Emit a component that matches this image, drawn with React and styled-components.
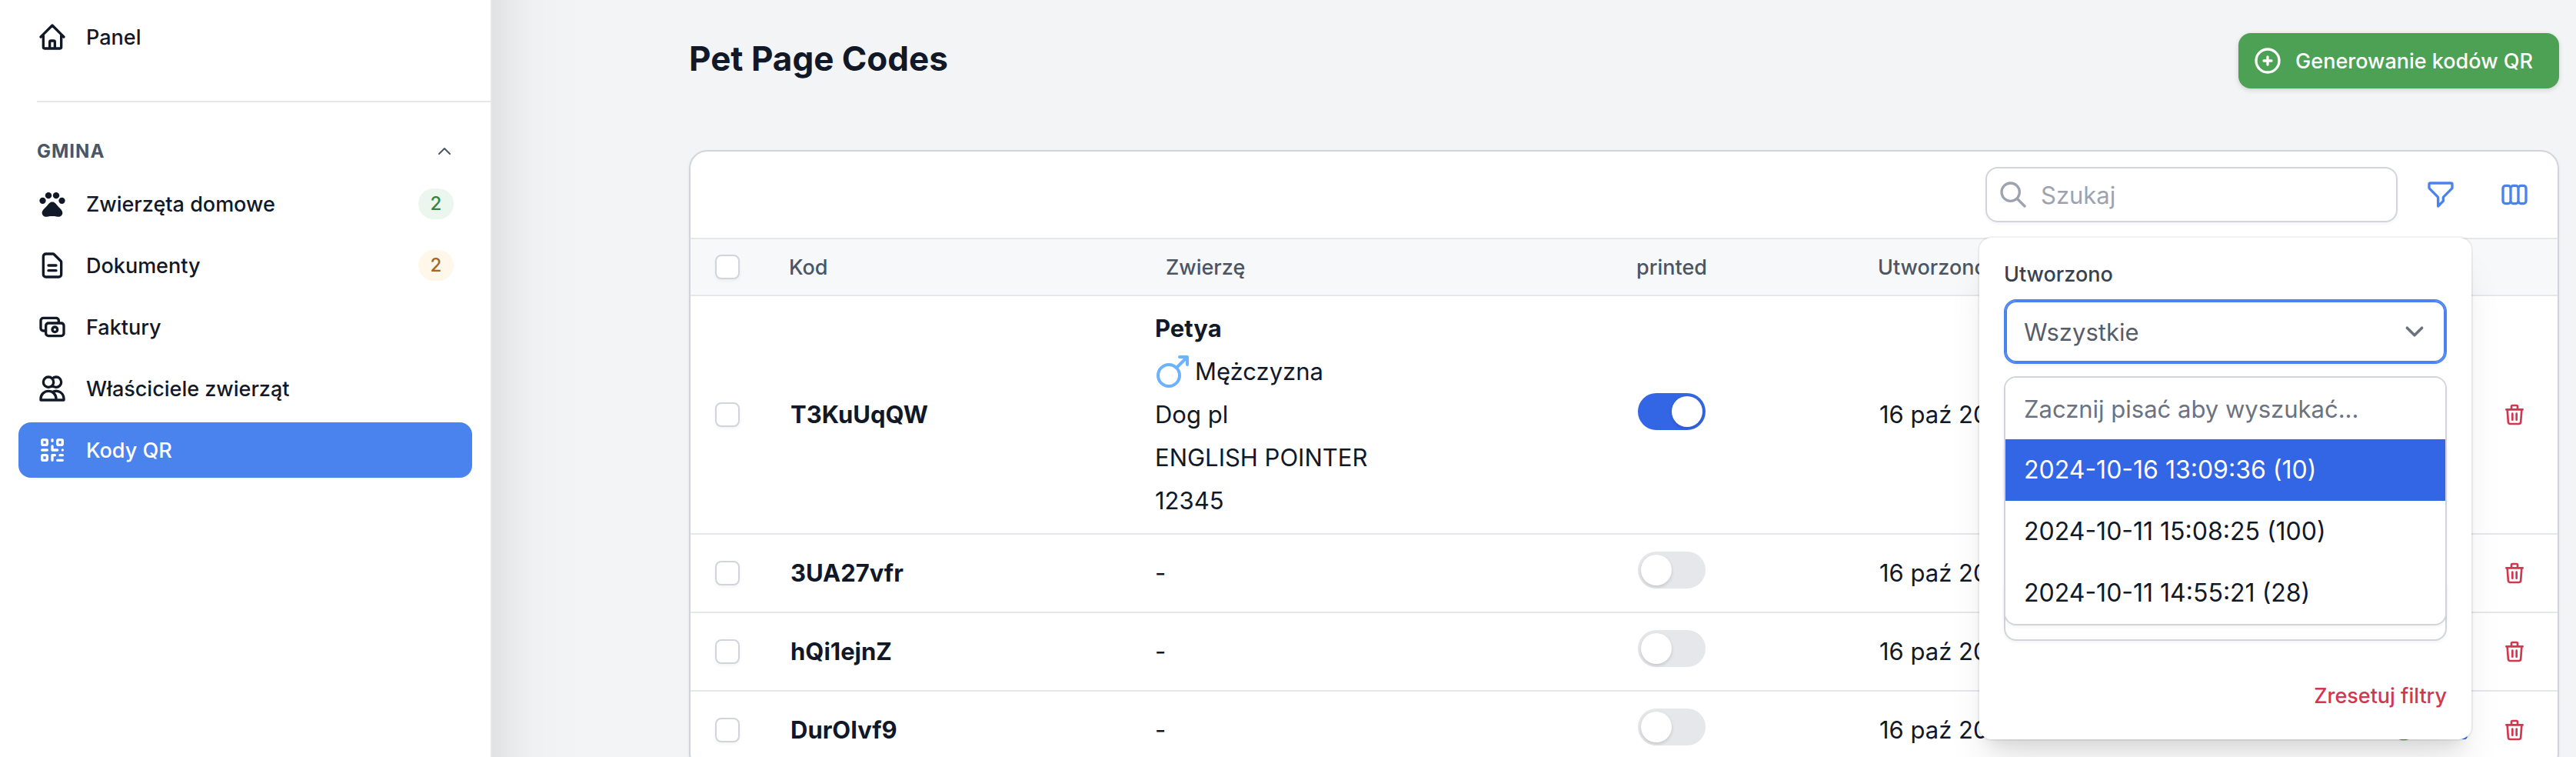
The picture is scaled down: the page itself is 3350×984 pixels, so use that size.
import { useState } from "react";
import styled, { createGlobalStyle, css } from "styled-components";
import {
  HiOutlineHome,
  HiOutlineChevronUp,
  HiOutlineDocumentText,
  HiOutlineCash,
  HiOutlineUsers,
  HiOutlineQrcode,
  HiOutlinePlusCircle,
  HiOutlineSearch,
  HiOutlineFilter,
  HiOutlineViewBoards,
  HiOutlineTrash,
  HiOutlinePencilAlt,
  HiOutlineCheckCircle,
} from "react-icons/hi";
import { MdPets } from "react-icons/md";

const menu = [
  { label: "Zwierzęta domowe", icon: MdPets, badge: 2, tone: "success" },
  { label: "Dokumenty", icon: HiOutlineDocumentText, badge: 2, tone: "warning" },
  { label: "Faktury", icon: HiOutlineCash },
  { label: "Właściciele zwierząt", icon: HiOutlineUsers },
  { label: "Kody QR", icon: HiOutlineQrcode, active: true },
];

const codes = [
  {
    code: "T3KuUqQW",
    printed: true,
    pet: {
      name: "Petya",
      gender: "Mężczyzna",
      kind: "Dog pl",
      breed: "ENGLISH POINTER",
      chip: "12345",
    },
  },
  { code: "3UA27vfr", printed: false },
  { code: "hQi1ejnZ", printed: false },
  { code: "DurOIvf9", printed: false },
];

const batches = [
  "2024-10-16 13:09:36 (10)",
  "2024-10-11 15:08:25 (100)",
  "2024-10-11 14:55:21 (28)",
];

function MaleIcon() {
  return (
    <svg width="44" height="44" viewBox="-2 -1 44 44" fill="none" stroke="#6cb2fc" strokeWidth="4">
      <circle cx="16" cy="26" r="14" />
      <path d="M26 16L39 3M30 2h10v10" strokeLinecap="round" strokeLinejoin="round" />
    </svg>
  );
}

function Sidebar() {
  return (
    <Aside>
      <NavItem href="#panel">
        <HiOutlineHome />
        <span>Panel</span>
      </NavItem>
      <Divider />
      <GroupButton type="button">
        Gmina
        <HiOutlineChevronUp />
      </GroupButton>
      <NavList>
        {menu.map(({ label, icon: Icon, badge, tone, active }) => (
          <li key={label}>
            <NavItem href="#" $active={active}>
              <Icon />
              <span>{label}</span>
              {badge && <Badge $tone={tone}>{badge}</Badge>}
            </NavItem>
          </li>
        ))}
      </NavList>
    </Aside>
  );
}

function Filters() {
  const [selected, setSelected] = useState(batches[0]);
  return (
    <Popover>
      <Field>
        <label htmlFor="created">Utworzono</label>
        <SelectWrap>
          <Select id="created" $focused>
            <option>Wszystkie</option>
          </Select>
          <Arrow />
        </SelectWrap>
        <Dropdown>
          <input
            type="text"
            aria-label="Zacznij pisać aby wyszukać..."
            placeholder="Zacznij pisać aby wyszukać..."
          />
          <ul role="listbox" aria-label="Utworzono">
            {batches.map((batch) => (
              <Option
                key={batch}
                role="option"
                aria-selected={batch === selected}
                $selected={batch === selected}
                onMouseEnter={() => setSelected(batch)}
              >
                {batch}
              </Option>
            ))}
          </ul>
        </Dropdown>
      </Field>
      <PlainField>
        <Select aria-label="printed" />
      </PlainField>
      <PlainField>
        <Select aria-label="Zwierzę" />
      </PlainField>
      <ResetButton type="button">Zresetuj filtry</ResetButton>
    </Popover>
  );
}

function Arrow() {
  return (
    <svg width="48" height="48" viewBox="0 0 20 20" fill="none" stroke="#6b7280" strokeWidth="1.5">
      <path d="M6 8l4 4 4-4" strokeLinecap="round" strokeLinejoin="round" />
    </svg>
  );
}

function CodeRow({ row }) {
  const { code, pet } = row;
  const [printed, setPrinted] = useState(row.printed);
  return (
    <tr>
      <td>
        <Checkbox aria-label={code} />
      </td>
      <td>
        <strong>{code}</strong>
      </td>
      <PetCell>
        {pet ? (
          <>
            <strong>{pet.name}</strong>
            <Gender>
              <MaleIcon />
              {pet.gender}
            </Gender>
            <div>{pet.kind}</div>
            <div>{pet.breed}</div>
            <div>{pet.chip}</div>
          </>
        ) : (
          "-"
        )}
      </PetCell>
      <SwitchCell>
        <Switch
          aria-label={`printed ${code}`}
          checked={printed}
          onChange={() => setPrinted(!printed)}
        />
      </SwitchCell>
      <td>16 paź 2024 13:09</td>
      <td>
        <Actions>
          <ActionButton type="button" aria-label="Zatwierdź" $color="#4ca154">
            <HiOutlineCheckCircle />
          </ActionButton>
          <ActionButton type="button" aria-label="Edytuj" $color="#3366e4">
            <HiOutlinePencilAlt />
          </ActionButton>
          <ActionButton type="button" aria-label="Usuń" $color="#d23750">
            <HiOutlineTrash />
          </ActionButton>
        </Actions>
      </td>
    </tr>
  );
}

function App() {
  return (
    <>
      <GlobalStyle />
      <Shell>
        <Sidebar />
        <Main>
          <PageHeader>
            <h1>Pet Page Codes</h1>
            <PrimaryButton type="button">
              <HiOutlinePlusCircle />
              Generowanie kodów QR
            </PrimaryButton>
          </PageHeader>
          <Card>
            <Toolbar>
              <Search>
                <HiOutlineSearch />
                <input type="search" aria-label="Szukaj" placeholder="Szukaj" />
              </Search>
              <FilterWrap>
                <IconButton type="button" aria-label="Filtry">
                  <HiOutlineFilter />
                </IconButton>
                <Filters />
              </FilterWrap>
              <IconButton type="button" aria-label="Kolumny">
                <HiOutlineViewBoards />
              </IconButton>
            </Toolbar>
            <Table>
              <colgroup>
                <Col $width="96px" />
                <Col $width="490px" />
                <Col $width="612px" />
                <Col $width="314px" />
                <Col />
                <Col $width="320px" />
              </colgroup>
              <thead>
                <tr>
                  <th>
                    <Checkbox aria-label="Zaznacz wszystko" />
                  </th>
                  <th>Kod</th>
                  <th>Zwierzę</th>
                  <th>printed</th>
                  <th>Utworzono</th>
                  <th></th>
                </tr>
              </thead>
              <tbody>
                {codes.map((row) => (
                  <CodeRow key={row.code} row={row} />
                ))}
              </tbody>
            </Table>
          </Card>
        </Main>
      </Shell>
    </>
  );
}

const GlobalStyle = createGlobalStyle`
  *, *::before, *::after {
    box-sizing: border-box;
  }
  body {
    margin: 0;
    background: #f3f4f6;
    color: #111827;
    font-family: Inter, "Liberation Sans", sans-serif;
    font-size: 31px;
  }
  h1, ul {
    margin: 0;
    padding: 0;
  }
  ul {
    list-style: none;
  }
  button, input, select {
    font: inherit;
    color: inherit;
    margin: 0;
  }
  button {
    border: 0;
    padding: 0;
    background: none;
    cursor: pointer;
  }
  svg {
    display: block;
    flex-shrink: 0;
  }
`;

const Shell = styled.div`
  display: flex;
  height: 100vh;
  overflow: hidden;
`;

const Aside = styled.nav`
  width: 640px;
  flex-shrink: 0;
  padding: 12px 24px;
  background: #fff;
  border-right: 2px solid #e5e7eb;
`;

const NavList = styled.ul`
  display: flex;
  flex-direction: column;
  gap: 8px;
`;

const NavItem = styled.a`
  display: flex;
  align-items: center;
  gap: 24px;
  height: 72px;
  padding: 0 24px;
  border-radius: 16px;
  font-size: 27px;
  font-weight: 500;
  text-decoration: none;
  color: ${({ $active }) => ($active ? "#fff" : "#111827")};
  background: ${({ $active }) => ($active ? "#4b83ee" : "transparent")};
  svg {
    width: 40px;
    height: 40px;
  }
  span:first-of-type {
    flex: 1;
  }
`;

const tones = {
  success: css`
    background: #ebf7ee;
    color: #3a833f;
  `,
  warning: css`
    background: #fef7ea;
    color: #a3681c;
  `,
};

const Badge = styled.span`
  min-width: 46px;
  padding: 0 12px;
  border-radius: 20px;
  font-size: 24px;
  line-height: 40px;
  text-align: center;
  ${({ $tone }) => tones[$tone]}
`;

const Divider = styled.div`
  height: 2px;
  margin: 47px -24px 48px 24px;
  background: #e5e7eb;
`;

const GroupButton = styled.button`
  display: flex;
  align-items: center;
  justify-content: space-between;
  width: 100%;
  margin-bottom: 16px;
  padding: 0 24px;
  color: #4b5563;
  font-size: 24px;
  font-weight: 700;
  line-height: 32px;
  text-transform: uppercase;
  letter-spacing: 1px;
  svg {
    width: 24px;
    height: 24px;
  }
`;

const Main = styled.main`
  flex: 1;
  min-width: 0;
  padding: 43px 22px 0 256px;
  /* soft shade that the sidebar throws on the page */
  background: linear-gradient(
      90deg,
      rgba(0, 0, 0, 0.08) 0,
      rgba(0, 0, 0, 0.04) 26px,
      rgba(0, 0, 0, 0.017) 50px,
      rgba(0, 0, 0, 0.006) 76px,
      transparent 120px
    )
    #f3f4f6;
`;

const PageHeader = styled.header`
  display: flex;
  align-items: flex-start;
  justify-content: space-between;
  margin-bottom: 80px;
  h1 {
    font-size: 44px;
    font-weight: 700;
    line-height: 66px;
  }
`;

const PrimaryButton = styled.button`
  display: flex;
  align-items: center;
  gap: 16px;
  height: 72px;
  padding: 0 34px 0 18px;
  border-radius: 16px;
  background: #4ca154;
  color: #fff;
  font-size: 27px;
  font-weight: 500;
  box-shadow: 0 2px 6px rgba(0, 0, 0, 0.15);
  svg {
    width: 40px;
    height: 40px;
  }
`;

const Card = styled.section`
  background: #fff;
  border: 2px solid #d1d5db;
  border-radius: 24px;
  box-shadow: 0 2px 4px rgba(0, 0, 0, 0.05);
`;

const Toolbar = styled.div`
  display: flex;
  align-items: center;
  justify-content: flex-end;
  gap: 16px;
  padding: 16px;
`;

const Search = styled.label`
  display: flex;
  align-items: center;
  gap: 16px;
  width: 536px;
  height: 72px;
  padding: 0 14px;
  border: 2px solid #d1d5db;
  border-radius: 16px;
  color: #9ca3af;
  box-shadow: 0 2px 4px rgba(0, 0, 0, 0.05);
  svg {
    width: 40px;
    height: 40px;
  }
  input {
    flex: 1;
    min-width: 0;
    padding: 0;
    border: 0;
    outline: 0;
    background: none;
    color: #111827;
  }
  input::placeholder {
    color: #9ca3af;
  }
`;

const IconButton = styled.button`
  display: flex;
  align-items: center;
  justify-content: center;
  width: 80px;
  height: 80px;
  color: #4b83ee;
  svg {
    width: 40px;
    height: 40px;
  }
`;

const FilterWrap = styled.div`
  position: relative;
`;

const Popover = styled.div`
  position: absolute;
  z-index: 10;
  top: calc(100% + 16px);
  right: 0;
  display: flex;
  flex-direction: column;
  gap: 48px;
  width: 640px;
  padding: 32px;
  border-radius: 16px;
  background: #fff;
  box-shadow: 0 0 0 2px rgba(0, 0, 0, 0.05), 0 40px 50px -10px rgba(0, 0, 0, 0.1),
    0 16px 20px -12px rgba(0, 0, 0, 0.1);
`;

const Field = styled.div`
  position: relative;
  z-index: 1;
  display: flex;
  flex-direction: column;
  gap: 16px;
  label {
    color: #374151;
    font-size: 27px;
    font-weight: 500;
    line-height: 32px;
  }
`;

const PlainField = styled.div`
  padding-top: 48px;
`;

const SelectWrap = styled.div`
  position: relative;
  svg {
    position: absolute;
    top: 18px;
    right: 18px;
    pointer-events: none;
  }
`;

const Select = styled.select`
  display: block;
  width: 100%;
  height: 84px;
  padding: 0 24px;
  appearance: none;
  border: 2px solid ${({ $focused }) => ($focused ? "#4b83ee" : "#d1d5db")};
  border-radius: 16px;
  background: #fff;
  color: #565c68;
  box-shadow: ${({ $focused }) => ($focused ? "inset 0 0 0 2px #4b83ee, " : "")} 0 2px 4px
    rgba(0, 0, 0, 0.05);
`;

const Dropdown = styled.div`
  position: absolute;
  top: calc(100% + 16px);
  left: 0;
  right: 0;
  overflow: hidden;
  border: 2px solid #d1d5db;
  border-radius: 16px;
  background: #fff;
  box-shadow: 0 2px 4px rgba(0, 0, 0, 0.05);
  input {
    display: block;
    width: 100%;
    height: 80px;
    padding: 0 24px;
    border: 0;
    outline: 0;
  }
  input::placeholder {
    color: #6b7280;
  }
`;

const Option = styled.li`
  padding: 0 24px;
  font-size: 32px;
  line-height: 80px;
  color: ${({ $selected }) => ($selected ? "#fff" : "#111827")};
  background: ${({ $selected }) => ($selected ? "#3366e4" : "#fff")};
`;

const ResetButton = styled.button`
  align-self: flex-end;
  color: #d23750;
  font-size: 27px;
  font-weight: 500;
  line-height: 48px;
`;

const Table = styled.table`
  width: 100%;
  table-layout: fixed;
  border-collapse: separate;
  border-spacing: 0;
  text-align: left;
  white-space: nowrap;
  th {
    height: 76px;
    padding: 0 32px;
    border: solid #e5e7eb;
    border-width: 2px 0;
    background: #f7f8fa;
    color: #4b5563;
    font-size: 27px;
    font-weight: 500;
  }
  td {
    height: 102px;
    padding: 14px 34px;
    border-bottom: 2px solid #e5e7eb;
    line-height: 56px;
  }
  td:first-child {
    padding: 0 32px;
  }
  strong {
    font-weight: 700;
  }
`;

const Col = styled.col`
  width: ${({ $width }) => $width || "auto"};
`;

const PetCell = styled.td`
  && {
    padding-left: 18px;
  }
  strong {
    display: block;
  }
`;

const Gender = styled.div`
  display: flex;
  align-items: center;
  gap: 8px;
`;

const SwitchCell = styled.td`
  && {
    padding-bottom: 22px;
  }
`;

const Checkbox = styled.input.attrs({ type: "checkbox" })`
  display: block;
  width: 32px;
  height: 32px;
  appearance: none;
  border: 2px solid #d1d5db;
  border-radius: 8px;
  background: #fff;
  box-shadow: 0 2px 4px rgba(0, 0, 0, 0.05);
  &:checked {
    background: #3366e4;
  }
`;

const Switch = styled.input.attrs({ type: "checkbox", role: "switch" })`
  display: block;
  width: 88px;
  height: 48px;
  padding: 4px;
  appearance: none;
  border-radius: 24px;
  background: #e5e7eb;
  cursor: pointer;
  &::before {
    content: "";
    display: block;
    width: 40px;
    height: 40px;
    border-radius: 50%;
    background: #fff;
    box-shadow: 0 2px 4px rgba(0, 0, 0, 0.15);
  }
  &:checked {
    background: #3366e4;
  }
  &:checked::before {
    margin-left: auto;
  }
`;

const Actions = styled.div`
  display: flex;
  justify-content: flex-end;
  gap: 40px;
  margin-right: 6px;
`;

const ActionButton = styled.button`
  color: ${({ $color }) => $color};
  svg {
    width: 32px;
    height: 32px;
  }
`;

export default App;
